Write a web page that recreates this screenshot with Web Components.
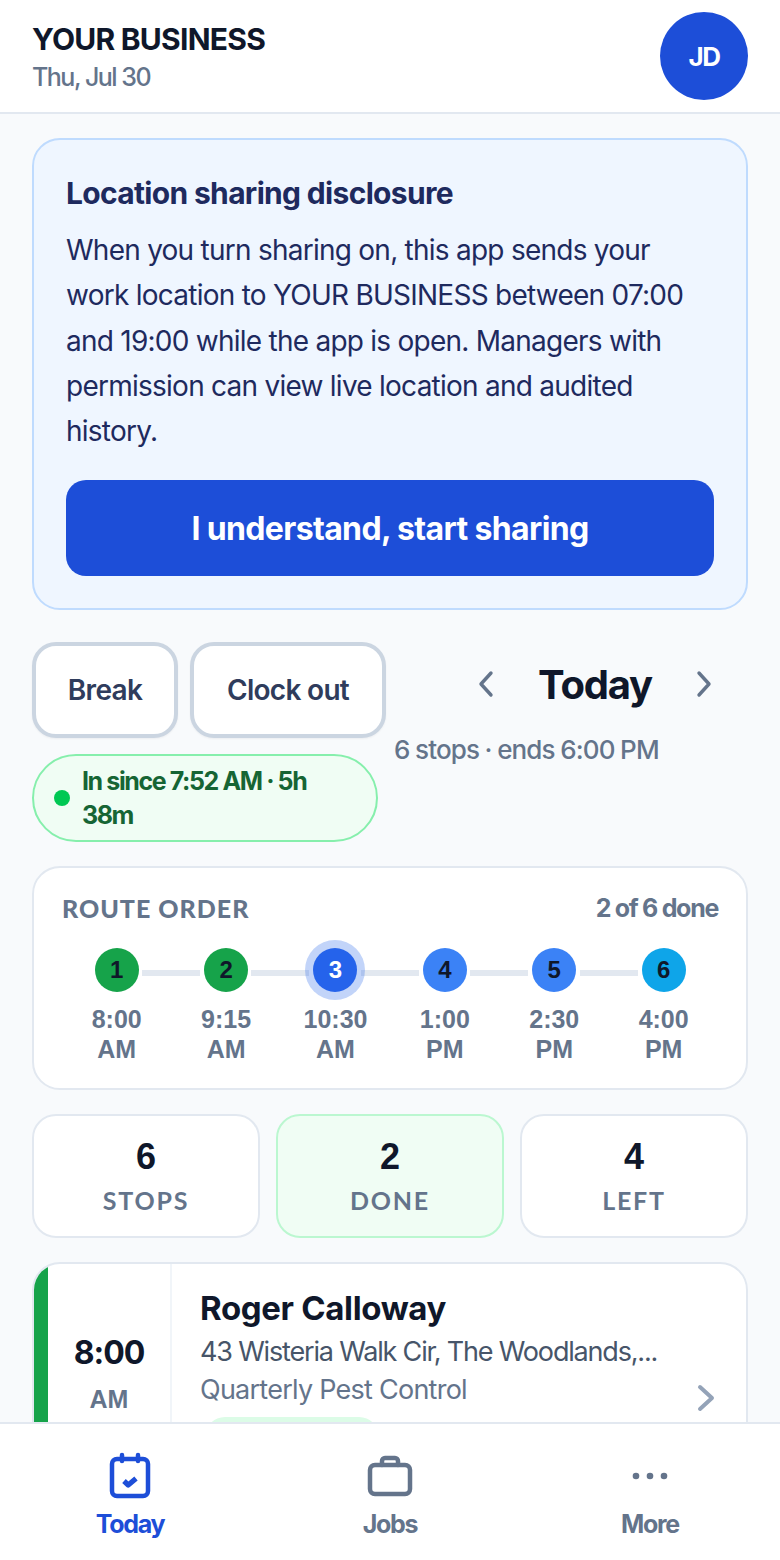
<!DOCTYPE html>
<html lang="en">
<head>
<meta charset="utf-8">
<title>Today</title>
<style>
  html, body { margin: 0; padding: 0; background: #f8fafc; }
  body { font-family: Inter, "Liberation Sans", sans-serif; }
</style>
</head>
<body>
<app-shell>
  <app-header slot="header" name="YOUR BUSINESS" date="Thu, Jul 30" initials="JD"></app-header>
  <disclosure-card heading="Location sharing disclosure" action="I understand, start sharing">
    When you turn sharing on, this app sends your work location to YOUR BUSINESS between 07:00 and 19:00 while the app is open. Managers with permission can view live location and audited history.
  </disclosure-card>
  <shift-row></shift-row>
  <route-order></route-order>
  <stat-row></stat-row>
  <job-card time="8:00" period="AM" name="Roger Calloway" address="43 Wisteria Walk Cir, The Woodlands,..." service="Quarterly Pest Control"></job-card>
  <bottom-nav slot="nav"></bottom-nav>
</app-shell>

<script>
'use strict';

// Small helper, every element below just hands it a template string.
function shadow(el, html) {
  el.attachShadow({ mode: 'open' }).innerHTML = html;
}

class AppShell extends HTMLElement {
  constructor() {
    super();
    shadow(this, `
      <style>
        :host { display: flex; flex-direction: column; height: 1560px; width: 780px; background: #f8fafc; overflow: hidden; }
        main { flex: 1; min-height: 0; overflow: hidden; padding: 24px 32px 0; display: flex; flex-direction: column; gap: 24px; }
        ::slotted(disclosure-card) { margin-bottom: 8px; }
      </style>
      <slot name="header"></slot>
      <main><slot></slot></main>
      <slot name="nav"></slot>`);
  }
}

class AppHeader extends HTMLElement {
  connectedCallback() {
    shadow(this, `
      <style>
        :host { display: flex; flex: none; align-items: center; justify-content: space-between; height: 112px; padding: 0 32px; background: #fff; border-bottom: 2px solid #e2e8f0; }
        .text { padding-top: 4px; }
        .name { font-size: 30px; line-height: 38px; font-weight: 700; letter-spacing: -.75px; color: #0f172a; }
        .date { font-size: 25px; line-height: 38px; font-weight: 500; letter-spacing: -1.5px; color: #64748b; }
        .avatar { width: 88px; height: 88px; border-radius: 50%; background: #1d4ed8; color: #fff; display: flex; align-items: center; justify-content: center; font-size: 26px; font-weight: 700; letter-spacing: -1.5px; }
      </style>
      <div class="text">
        <div class="name">${this.getAttribute('name')}</div>
        <div class="date">${this.getAttribute('date')}</div>
      </div>
      <div class="avatar">${this.getAttribute('initials')}</div>`);
  }
}

class DisclosureCard extends HTMLElement {
  connectedCallback() {
    shadow(this, `
      <style>
        :host { display: block; flex: none; background: #eff6ff; border: 2px solid #bfdbfe; border-radius: 28px; padding: 32px; }
        h2 { margin: 0 0 14px; font-size: 30px; line-height: 42px; font-weight: 700; letter-spacing: -.67px; color: #1e2a5e; }
        p { margin: 0 0 26px; font-size: 28px; line-height: 45.3px; letter-spacing: -.75px; color: #1e2a5e; }
        button { display: block; width: 100%; height: 96px; border: 0; border-radius: 20px; background: #1d4ed8; color: #fff; font: 700 32px Inter, sans-serif; letter-spacing: -.63px; }
      </style>
      <h2>${this.getAttribute('heading')}</h2>
      <p><slot></slot></p>
      <button>${this.getAttribute('action')}</button>`);
  }
}

class ShiftRow extends HTMLElement {
  constructor() {
    super();
    shadow(this, `
      <style>
        :host { display: flex; flex: none; }
        .left { width: 354px; flex: none; }
        .btns { display: flex; gap: 12px; }
        button { height: 96px; box-sizing: border-box; border: 4px solid #cbd5e1; border-radius: 24px; background: #fff; color: #2f3c5c; font: 600 28px Inter, sans-serif; letter-spacing: -.7px; padding: 0; box-shadow: 0 1px 2px rgba(15,23,42,.05); }
        .b1 { width: 146px; } .b2 { width: 196px; }
        .pill { box-sizing: border-box; width: 346px; height: 88px; margin-top: 16px; border: 2px solid #86efac; border-radius: 44px; background: #f0fdf4; display: flex; align-items: center; gap: 12px; padding: 0 20px; color: #166534; font-size: 25px; line-height: 34px; font-weight: 700; letter-spacing: -1.4px; }
        .pill .txt { width: 240px; }
        .dot { width: 16px; height: 16px; border-radius: 50%; background: #00c853; flex: none; }
        .right { flex: 1; padding-left: 8px; }
        .nav { display: flex; align-items: center; justify-content: center; gap: 34px; height: 84px; margin-left: 48px; }
        .today { font-size: 40px; font-weight: 700; letter-spacing: -1.2px; color: #0f172a; }
        svg { width: 36px; height: 36px; fill: none; stroke: #64748b; stroke-width: 3.4; stroke-linecap: round; stroke-linejoin: round; }
        .sub { margin-top: 6px; font-size: 26px; line-height: 36px; font-weight: 500; letter-spacing: -.85px; word-spacing: -.6px; color: #64748b; white-space: nowrap; }
      </style>
      <div class="left">
        <div class="btns"><button class="b1">Break</button><button class="b2">Clock out</button></div>
        <div class="pill"><span class="dot"></span><span class="txt">In since 7:52 AM · 5h 38m</span></div>
      </div>
      <div class="right">
        <div class="nav">
          <svg viewBox="0 0 36 36"><path d="M23 7 13 18l10 11"/></svg>
          <span class="today">Today</span>
          <svg viewBox="0 0 36 36"><path d="M13 7l10 11-10 11"/></svg>
        </div>
        <div class="sub">6 stops · ends 6:00 PM</div>
      </div>`);
  }
}

class RouteOrder extends HTMLElement {
  constructor() {
    super();
    const stops = [
      ['1', '8:00', 'AM', 'done'], ['2', '9:15', 'AM', 'done'], ['3', '10:30', 'AM', 'cur'],
      ['4', '1:00', 'PM', 'next'], ['5', '2:30', 'PM', 'next'], ['6', '4:00', 'PM', 'last'],
    ];
    shadow(this, `
      <style>
        :host { display: block; flex: none; background: #fff; border: 2px solid #e2e8f0; border-radius: 28px; padding: 22px 28px 24px; height: 224px; box-sizing: border-box; }
        .top { display: flex; justify-content: space-between; align-items: center; height: 36px; color: #64748b; font-size: 25px; font-weight: 700; }
        .top b { letter-spacing: 1px; font-family: Lato, sans-serif; font-size: 25px; }
        .top span { letter-spacing: -1.3px; }
        .stops { display: grid; grid-template-columns: repeat(6, 109.4px); margin-top: 22px; }
        .stop { position: relative; display: flex; flex-direction: column; align-items: center; }
        .stop:not(:last-child)::after { content: ''; position: absolute; top: 22px; left: 80px; width: 58px; height: 6px; background: #e2e8f0; }
        .c { position: relative; z-index: 1; width: 44px; height: 44px; border-radius: 50%; display: flex; align-items: center; justify-content: center; font: 700 24px "Liberation Sans", sans-serif; color: #0f172a; }
        .done { background: #16a34a; } .next { background: #3b82f6; } .last { background: #0ea5e9; }
        .cur { background: #2563eb; color: #fff; box-shadow: 0 0 0 8px rgba(37,99,235,.28); }
        .t { margin-top: 12px; text-align: center; font: 700 25px/30px "Liberation Sans", sans-serif; color: #64748b; }
      </style>
      <div class="top"><b>ROUTE ORDER</b><span>2 of 6 done</span></div>
      <div class="stops">
        ${stops.map(s => `<div class="stop"><div class="c ${s[3]}">${s[0]}</div><div class="t">${s[1]}<br>${s[2]}</div></div>`).join('')}
      </div>`);
  }
}

class StatRow extends HTMLElement {
  constructor() {
    super();
    const stats = [['6', 'STOPS', ''], ['2', 'DONE', 'ok'], ['4', 'LEFT', '']];
    shadow(this, `
      <style>
        :host { display: grid; flex: none; grid-template-columns: repeat(3, 1fr); gap: 16px; }
        div.s { height: 124px; box-sizing: border-box; background: #fff; border: 2px solid #e2e8f0; border-radius: 24px; text-align: center; padding-top: 19px; }
        .ok { background: #f0fdf4 !important; border-color: #bbf7d0 !important; }
        .n { font: 700 36px/44px "Liberation Sans", sans-serif; color: #0f172a; }
        .l { margin-top: 4px; font: 700 25px/34px Lato, sans-serif; letter-spacing: 1.8px; color: #64748b; }
      </style>
      ${stats.map(s => `<div class="s ${s[2]}"><div class="n">${s[0]}</div><div class="l">${s[1]}</div></div>`).join('')}`);
  }
}

class JobCard extends HTMLElement {
  connectedCallback() {
    shadow(this, `
      <style>
        :host { display: flex; flex: none; background: #fff; border: 2px solid #e2e8f0; border-radius: 28px; overflow: hidden; height: 240px; box-sizing: border-box; }
        .bar { width: 14px; background: #16a34a; flex: none; }
        .time { width: 122px; flex: none; border-right: 2px solid #f1f5f9; text-align: center; padding-top: 67px; box-sizing: content-box; }
        .h { font: 700 32px/44px Inter, sans-serif; letter-spacing: -1px; color: #0f172a; }
        .p { margin-top: 6px; font: 700 25px/36px "Liberation Sans", sans-serif; color: #64748b; }
        .body { flex: 1; min-width: 0; padding: 22px 0 0 28px; position: relative; }
        .name { font-size: 33px; line-height: 44px; font-weight: 700; letter-spacing: -.35px; color: #0f172a; }
        .addr { margin-top: 3px; font-size: 27px; line-height: 38px; letter-spacing: -1.18px; color: #475569; white-space: nowrap; }
        .svc { font-size: 27px; line-height: 38px; letter-spacing: -.75px; color: #64748b; }
        .tag { margin: 8px 0 0 5px; width: 174px; height: 40px; border-radius: 20px; background: #dcfce7; }
        svg { position: absolute; right: 26px; top: 118px; width: 28px; height: 32px; fill: none; stroke: #94a3b8; stroke-width: 4; stroke-linecap: round; stroke-linejoin: round; }
      </style>
      <div class="bar"></div>
      <div class="time">
        <div class="h">${this.getAttribute('time')}</div>
        <div class="p">${this.getAttribute('period')}</div>
      </div>
      <div class="body">
        <div class="name">${this.getAttribute('name')}</div>
        <div class="addr">${this.getAttribute('address')}</div>
        <div class="svc">${this.getAttribute('service')}</div>
        <div class="tag"></div>
        <svg viewBox="0 0 28 32"><path d="M8 5l12 11L8 27"/></svg>
      </div>`);
  }
}

class BottomNav extends HTMLElement {
  constructor() {
    super();
    shadow(this, `
      <style>
        :host { display: grid; flex: none; grid-template-columns: 260px 260px 260px; height: 138px; box-sizing: border-box; background: #fff; border-top: 2px solid #e2e8f0; }
        a { display: flex; flex-direction: column; align-items: center; padding-top: 26px; color: #64748b; font-size: 25px; line-height: 36px; font-weight: 700; letter-spacing: -1.3px; }
        a.on { color: #1d4ed8; }
        svg { width: 52px; height: 52px; fill: none; stroke: currentColor; stroke-width: 4.5; stroke-linecap: round; stroke-linejoin: round; margin-bottom: 4px; display: block; }
      </style>
      <a class="on">
        <svg viewBox="0 0 52 52"><rect x="8" y="9" width="36" height="37" rx="5"/><path d="M18 5v6M34 5v6"/><path d="M20 31l4.2 4L32 28.5" stroke-width="5.2" stroke-linecap="butt"/></svg>
        Today
      </a>
      <a>
        <svg viewBox="0 0 52 52"><rect x="6" y="15" width="40" height="29" rx="5"/><path d="M18 15v-4a3 3 0 0 1 3-3h10a3 3 0 0 1 3 3v4"/></svg>
        Jobs
      </a>
      <a>
        <svg viewBox="0 0 52 52"><circle cx="12" cy="26" r="3.3" fill="currentColor" stroke="none"/><circle cx="26" cy="26" r="3.3" fill="currentColor" stroke="none"/><circle cx="40" cy="26" r="3.3" fill="currentColor" stroke="none"/></svg>
        More
      </a>`);
  }
}

customElements.define('app-shell', AppShell);
customElements.define('app-header', AppHeader);
customElements.define('disclosure-card', DisclosureCard);
customElements.define('shift-row', ShiftRow);
customElements.define('route-order', RouteOrder);
customElements.define('stat-row', StatRow);
customElements.define('job-card', JobCard);
customElements.define('bottom-nav', BottomNav);
</script>
</body>
</html>
